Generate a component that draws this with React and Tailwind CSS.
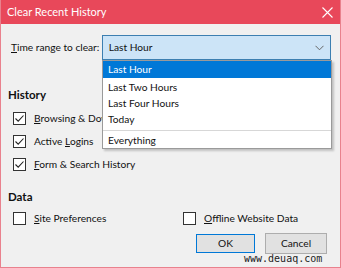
import React from 'react';

const Check = ({ checked }) => (
  <span className="w-[13px] h-[13px] border border-[#333] bg-white flex items-center justify-center shrink-0">
    {checked && (
      <svg width="11" height="11" viewBox="0 0 11 11">
        <path d="M1.5 5.5 L4.2 8.2 L9.5 2.5" fill="none" stroke="#222" strokeWidth="1.1" />
      </svg>
    )}
  </span>
);

const CheckRow = ({ checked, children, className = '' }) => (
  <div className={`flex items-center gap-[8px] h-[23px] whitespace-nowrap ${className}`}>
    <Check checked={checked} />
    <span>{children}</span>
  </div>
);

const ListItem = ({ children, selected }) => (
  <div className={`flex items-center px-[5px] ${selected ? 'bg-[#0078d7] text-white h-[17px]' : 'h-[16px]'}`}>{children}</div>
);

export default function App() {
  return (
    <div className="w-[341px] h-[268px] relative bg-[#f0f0f0] border-x border-b border-[#e9818d] text-[#111] text-[10.2px] font-['Lato',sans-serif] overflow-hidden">
      {/* title bar */}
      <div className="h-[24px] bg-[#e8485a] flex items-center justify-between pl-[7px] pr-[8px] text-white text-[11px] -mx-px">
        <span>Clear Recent History</span>
        <svg width="11" height="11" viewBox="0 0 11 11">
          <path d="M0.5 0.5 L10.5 10.5 M10.5 0.5 L0.5 10.5" stroke="#fff" strokeWidth="1.1" />
        </svg>
      </div>

      <div className="px-[9px]">
        {/* time range */}
        <div className="flex items-center mt-[11px] h-[25px]">
          <span className="w-[92px] pl-px whitespace-nowrap"><u>T</u>ime range to clear:</span>
          <div className="w-[230px] h-[25px] border border-[#3c7fb1] bg-[#cce4f7] flex items-center justify-between pl-[6px] pr-[6px]">
            <span>Last Hour</span>
            <svg width="9" height="6" viewBox="0 0 9 6">
              <path d="M0.5 0.8 L4.5 4.8 L8.5 0.8" fill="none" stroke="#666" strokeWidth="1" />
            </svg>
          </div>
        </div>

        {/* history */}
        <div className="mt-[27px] -ml-[2px] font-bold text-[11.5px] leading-[16px]">History</div>
        <div className="pl-[3px] mt-[4px]">
          <CheckRow checked><u>B</u>rowsing &amp; Download History</CheckRow>
          <CheckRow checked>Active <u>L</u>ogins</CheckRow>
          <CheckRow checked><u>F</u>orm &amp; Search History</CheckRow>
        </div>

        {/* data */}
        <div className="mt-[13px] -ml-[2px] font-bold text-[11.5px] leading-[16px]">Data</div>
        <div className="pl-[3px] mt-[2px] flex">
          <CheckRow className="w-[170px]"><u>S</u>ite Preferences</CheckRow>
          <CheckRow><u>O</u>ffline Website Data</CheckRow>
        </div>

        {/* buttons */}
        <div className="flex justify-end gap-[10px] mt-[3px] pr-[4px]">
          <div className="w-[59px] h-[19px] mt-px border border-[#0078d7] bg-[#e1e1e1] flex items-center justify-center">OK</div>
          <div className="w-[62px] h-[21px] border border-[#adadad] bg-[#e1e1e1] flex items-center justify-center">Cancel</div>
        </div>
      </div>

      {/* open dropdown list */}
      <div className="absolute left-[101px] top-[60px] w-[230px] h-[89px] bg-white border border-[#9a9a9a] shadow-[2px_2px_2px_rgba(0,0,0,0.2)]">
        <ListItem selected>Last Hour</ListItem>
        <div className="h-[2px]" />
        <ListItem>Last Two Hours</ListItem>
        <ListItem>Last Four Hours</ListItem>
        <ListItem>Today</ListItem>
        <div className="h-[5px] flex items-center"><div className="w-full h-px bg-[#d7d7d7]" /></div>
        <ListItem>Everything</ListItem>
      </div>

      {/* watermark */}
      <div className="absolute left-[243px] top-[253px] text-[10px] leading-[12px] text-[#222] font-['DejaVu_Sans_Mono',monospace]">www.deuaq.com</div>
    </div>
  );
}
